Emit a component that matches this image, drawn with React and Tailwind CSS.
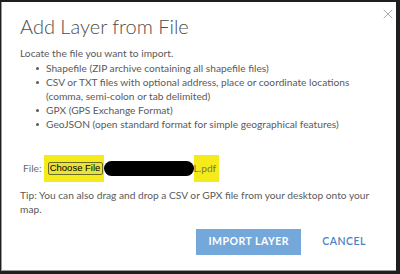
import { X } from 'lucide-react';

const formats = [
  'Shapefile (ZIP archive containing all shapefile files)',
  'CSV or TXT files with optional address, place or coordinate locations (comma, semi-colon or tab delimited)',
  'GPX (GPS Exchange Format)',
  'GeoJSON (open standard format for simple geographical features)',
];

const App = () => {
  return (
    <div className="w-[400px] h-[274px] bg-[#1f1f1f] pt-[2px] pl-[1px] pr-[4px] pb-[3px] font-['Lato',sans-serif]">
      <div className="relative h-full bg-white border-l border-b border-[#9a9a9a] pl-[18px] pr-[20px]">
        {/* Close */}
        <button className="absolute right-[0px] top-[4px] text-[#9b9b9b]">
          <X className="w-[16px] h-[16px]" strokeWidth={1.3} />
        </button>

        <h1 className="pt-[9px] text-[20px] leading-[30px] font-light text-[#4c4c4c]">Add Layer from File</h1>

        <p className="mt-[5px] text-[10.2px] leading-[14px] text-[#5a5a5a]">Locate the file you want to import.</p>

        <ul className="mt-[1px] pl-[25px] text-[10.2px] leading-[14px] text-[#5a5a5a]">
          {formats.map((f) => (
            <li key={f} className="relative pl-[1px]">
              <span className="absolute left-[-9px] top-[6px] w-[3px] h-[3px] rounded-full bg-[#5a5a5a]" />
              {f}
            </li>
          ))}
        </ul>

        {/* File row */}
        <div className="mt-[24px] ml-[3px] flex items-center text-[10.2px] text-[#6b6b6b]">
          <span className="mr-[2px]">File:</span>
          <div className="bg-[#f5ea1a] h-[27px] w-[60px] flex items-center pl-[4px]">
            <span className="h-[13px] w-[55px] whitespace-nowrap border border-[#6b6b2a] rounded-[2px] bg-[#e9e23a] flex items-center justify-center text-[9.5px] text-black font-['Liberation_Sans',sans-serif]">
              Choose File
            </span>
          </div>
          <div className="w-[90px] h-[15px] bg-black rounded-[8px]" />
          <div className="bg-[#f5ea1a] h-[27px] w-[25px] flex items-center text-[#7a7a50]">L.pdf</div>
        </div>

        <p className="mt-[7px] text-[10.2px] leading-[13.5px] text-[#5a5a5a]">
          Tip: You can also drag and drop a CSV or GPX file from your desktop onto your map.
        </p>

        <div className="mt-[13px] flex items-center justify-end">
          <button className="w-[105px] h-[26px] bg-[#74a7da] text-white text-[10.5px] font-bold tracking-[0.5px]">IMPORT LAYER</button>
          <button className="ml-[21px] mr-[10px] text-[#4c82c3] text-[10.5px] font-semibold tracking-[0.5px]">CANCEL</button>
        </div>
      </div>
    </div>
  );
};

export default App;
